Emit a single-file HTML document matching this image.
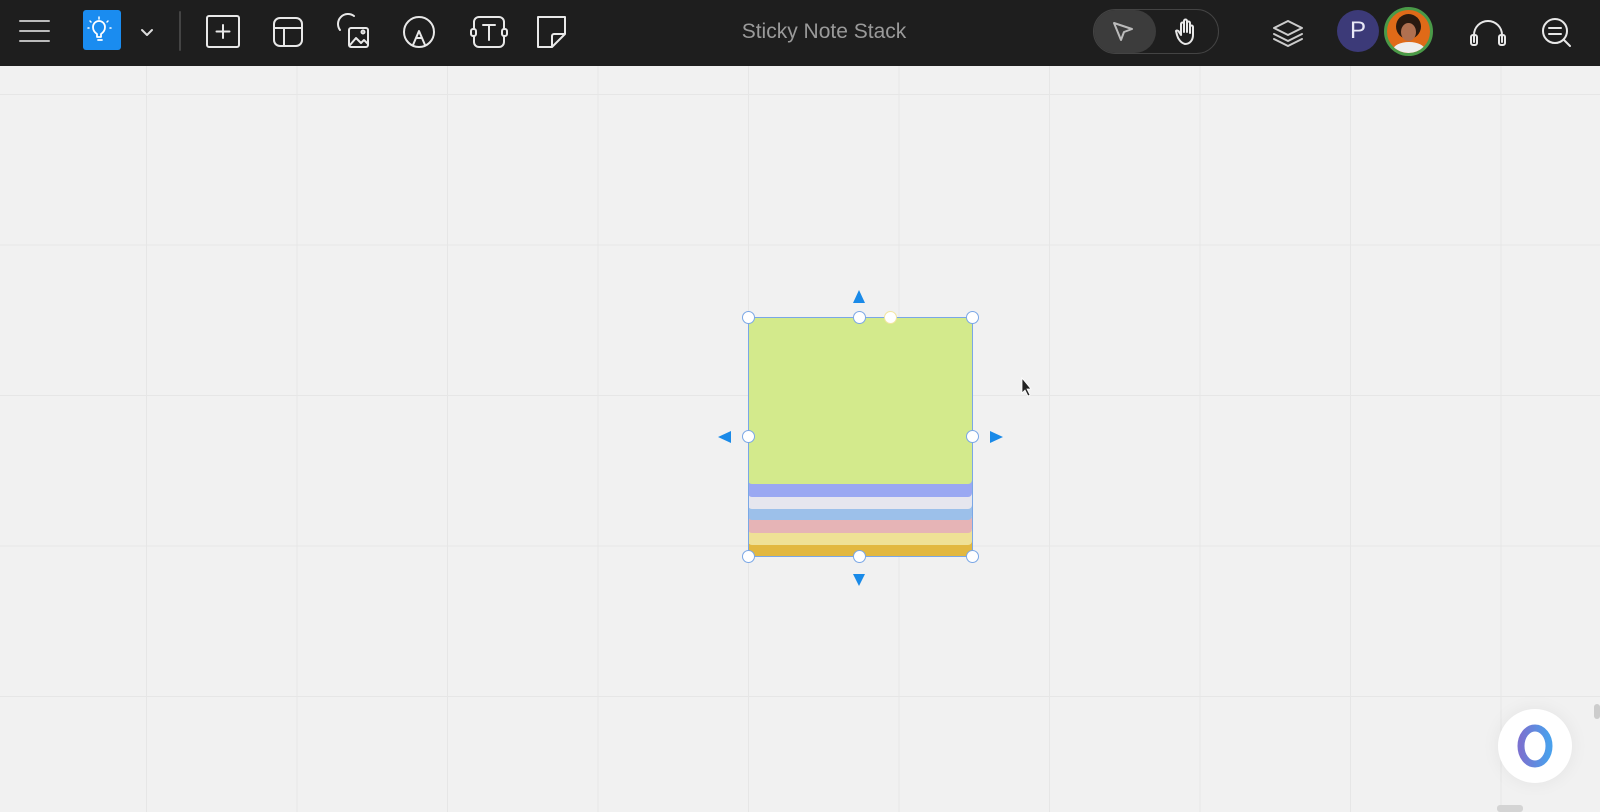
<!DOCTYPE html>
<html><head><meta charset="utf-8"><style>
*{margin:0;padding:0;box-sizing:border-box}
body{width:1600px;height:812px;overflow:hidden;background:#f1f1f1;font-family:"Liberation Sans",sans-serif;position:relative}
.top{position:absolute;left:0;top:0;width:1600px;height:66px;background:#1e1e1e}
.grid{position:absolute;left:0;top:66px;width:1600px;height:746px;
background-image:linear-gradient(#e6e6e6 1px,transparent 1px),linear-gradient(90deg,#e6e6e6 1px,transparent 1px);
background-size:150.5px 150.5px;background-position:146px 28px}
svg{position:absolute}
.note{position:absolute;left:748px;width:224px}
.h{position:absolute;width:13px;height:13px;border-radius:50%;background:#fff;border:1.5px solid #7aa7e6}
</style></head><body>
<div class="top"></div>
<svg width="1600" height="66" style="left:0;top:0" fill="none" stroke="#e8e8e8" stroke-width="2" stroke-linecap="round" stroke-linejoin="round">
<path d="M20 21h29M20 31h29M20 41h29" stroke="#bbb"/>
<rect x="83" y="10" width="38" height="40" rx="3" fill="#1a8cf0" stroke="none"/>
<path d="M97 34c-3-2-4-4-4-7a6 6 0 0 1 12 0c0 3-1 5-4 7v3h-4z M98 40h4" stroke="#fff" stroke-width="1.8"/>
<path d="M99 17v2M90 21l1 1M108 21l-1 1M88 28h1M110 28h1" stroke="#fff" stroke-width="1.5"/>
<path d="M142 30l5 5 5-5" stroke="#ddd"/>
<path d="M180 12v38" stroke="#444"/>
<rect x="207" y="16" width="32" height="31" rx="2"/><path d="M223 25v13M216.5 31.5h13"/>
<rect x="274" y="18" width="28" height="28" rx="6"/><path d="M274 28h28M284 28v18"/>
<path d="M340 30a10 10 0 0 1 14-14"/><rect x="349" y="28" width="19" height="19" rx="2"/><path d="M350 45l6-7 5 5 3-3 4 4"/><circle cx="363" cy="32" r="1.5"/>
<circle cx="419" cy="32" r="15"/><path d="M413 45l6-14 6 14M416 38h6"/>
<rect x="474" y="17" width="30" height="30" rx="5"/><path d="M483 25h12M489 25v15"/><rect x="471" y="29" width="5" height="7" rx="2" fill="#1e1e1e"/><rect x="502" y="29" width="5" height="7" rx="2" fill="#1e1e1e"/>
<path d="M538 17h27v17l-13 13h-14z M565 34h-11a2 2 0 0 0-2 2v11"/>
</svg>
<div style="position:absolute;left:700px;top:20px;width:248px;text-align:center;color:#9a9a9a;font-size:21px">Sticky Note Stack</div>
<div style="position:absolute;left:1093px;top:9px;width:126px;height:45px;border:1.5px solid #444;border-radius:23px"></div>
<div style="position:absolute;left:1094px;top:10px;width:62px;height:43px;background:#3c3c3c;border-radius:22px"></div>
<svg width="1600" height="66" style="left:0;top:0" fill="none" stroke="#e8e8e8" stroke-width="2" stroke-linecap="round" stroke-linejoin="round">
<path d="M1114 23l18 6-8 3-3 8z" stroke="#bbb"/>
<path d="M1185 44c-4-1-7-5-8-9l-1-4c1-1 3 0 3 1l2 3v-11c0-2 3-2 3 0v8-11c0-2 3-2 3 0v11-9c0-2 3-2 3 0v10-6c0-2 3-2 3 0v8c0 5-3 9-8 9z"/>
<path d="M1288 21l-14 7 14 7 14-7z M1274 34l14 7 14-7M1274 39l14 7 14-7" stroke="#ccc"/>
<path d="M1474 42v-7a14 14 0 0 1 28 0v7"/><rect x="1471" y="35" width="6" height="10" rx="2"/><rect x="1499" y="35" width="6" height="10" rx="2"/>
<circle cx="1555" cy="31" r="12"/><path d="M1549 28h12M1549 34h12M1564 40l6 6"/>
</svg>
<div style="position:absolute;left:1337px;top:10px;width:42px;height:42px;border-radius:50%;background:#3c3a78;color:#e8e8f6;font-size:24px;text-align:center;line-height:42px">P</div>
<div style="position:absolute;left:1384px;top:7px;width:49px;height:49px;border-radius:50%;background:#e06a18;border:3px solid #4a9a48;overflow:hidden">
<div style="position:absolute;left:9px;top:4px;width:25px;height:25px;border-radius:50%;background:#2a1a10"></div>
<div style="position:absolute;left:14px;top:13px;width:15px;height:18px;border-radius:50%;background:#b07050"></div>
<div style="position:absolute;left:6px;top:32px;width:32px;height:16px;border-radius:50% 50% 0 0;background:#eee"></div>
</div>
<div class="grid"></div>
<!-- note stack -->
<div class="note" style="top:540px;height:16px;background:#e2b840;border-radius:0 0 3px 3px"></div>
<div class="note" style="top:530px;height:15px;background:#efe196;border-radius:0 0 4px 4px"></div>
<div class="note" style="top:517px;height:16px;background:#e6b4b6;border-radius:0 0 4px 4px"></div>
<div class="note" style="top:505px;height:15px;background:#9cc0ea;border-radius:0 0 4px 4px"></div>
<div class="note" style="top:492px;height:17px;background:#e6e6ee;border-radius:0 0 4px 4px"></div>
<div class="note" style="top:480px;height:17px;background:#9aa8f2;border-radius:0 0 4px 4px"></div>
<div class="note" style="top:317px;height:167px;background:#d3ea8c;border-radius:0 0 4px 4px"></div>
<div style="position:absolute;left:748px;top:317px;width:225px;height:240px;border:1.3px solid #7aa7e6"></div>
<div class="h" style="left:742px;top:311px"></div><div class="h" style="left:853px;top:311px"></div><div class="h" style="left:966px;top:311px"></div>
<div class="h" style="left:884px;top:311px;border-color:#f2e6a0"></div>
<div class="h" style="left:742px;top:430px"></div><div class="h" style="left:966px;top:430px"></div>
<div class="h" style="left:742px;top:550px"></div><div class="h" style="left:853px;top:550px"></div><div class="h" style="left:966px;top:550px"></div>
<svg width="1600" height="812" style="left:0;top:0">
<path d="M859 290l6 13h-12z M859 586l6-12h-12z M718 437l13-6v12z M1003 437l-13-6v12z" fill="#1a8ae8"/>
<path d="M1022 378v15l3-3 3 6 2-1-3-6h4z" fill="#222" stroke="#fff" stroke-width=".8"/>
</svg>
<div style="position:absolute;left:1498px;top:709px;width:74px;height:74px;border-radius:50%;background:#fff;box-shadow:0 0 18px rgba(0,0,0,.06)"></div>
<svg width="60" height="60" style="left:1505px;top:716px"><defs><linearGradient id="g" x1="0" x2="1"><stop offset="0" stop-color="#7a72d0"/><stop offset="1" stop-color="#4aa0ec"/></linearGradient></defs><ellipse cx="30" cy="30" rx="14" ry="18" fill="none" stroke="url(#g)" stroke-width="7"/></svg>
<div style="position:absolute;left:1594px;top:704px;width:6px;height:15px;background:#ccc;border-radius:3px"></div>
<div style="position:absolute;left:1497px;top:805px;width:26px;height:7px;background:#d4d4d4;border-radius:3px"></div>
</body></html>
